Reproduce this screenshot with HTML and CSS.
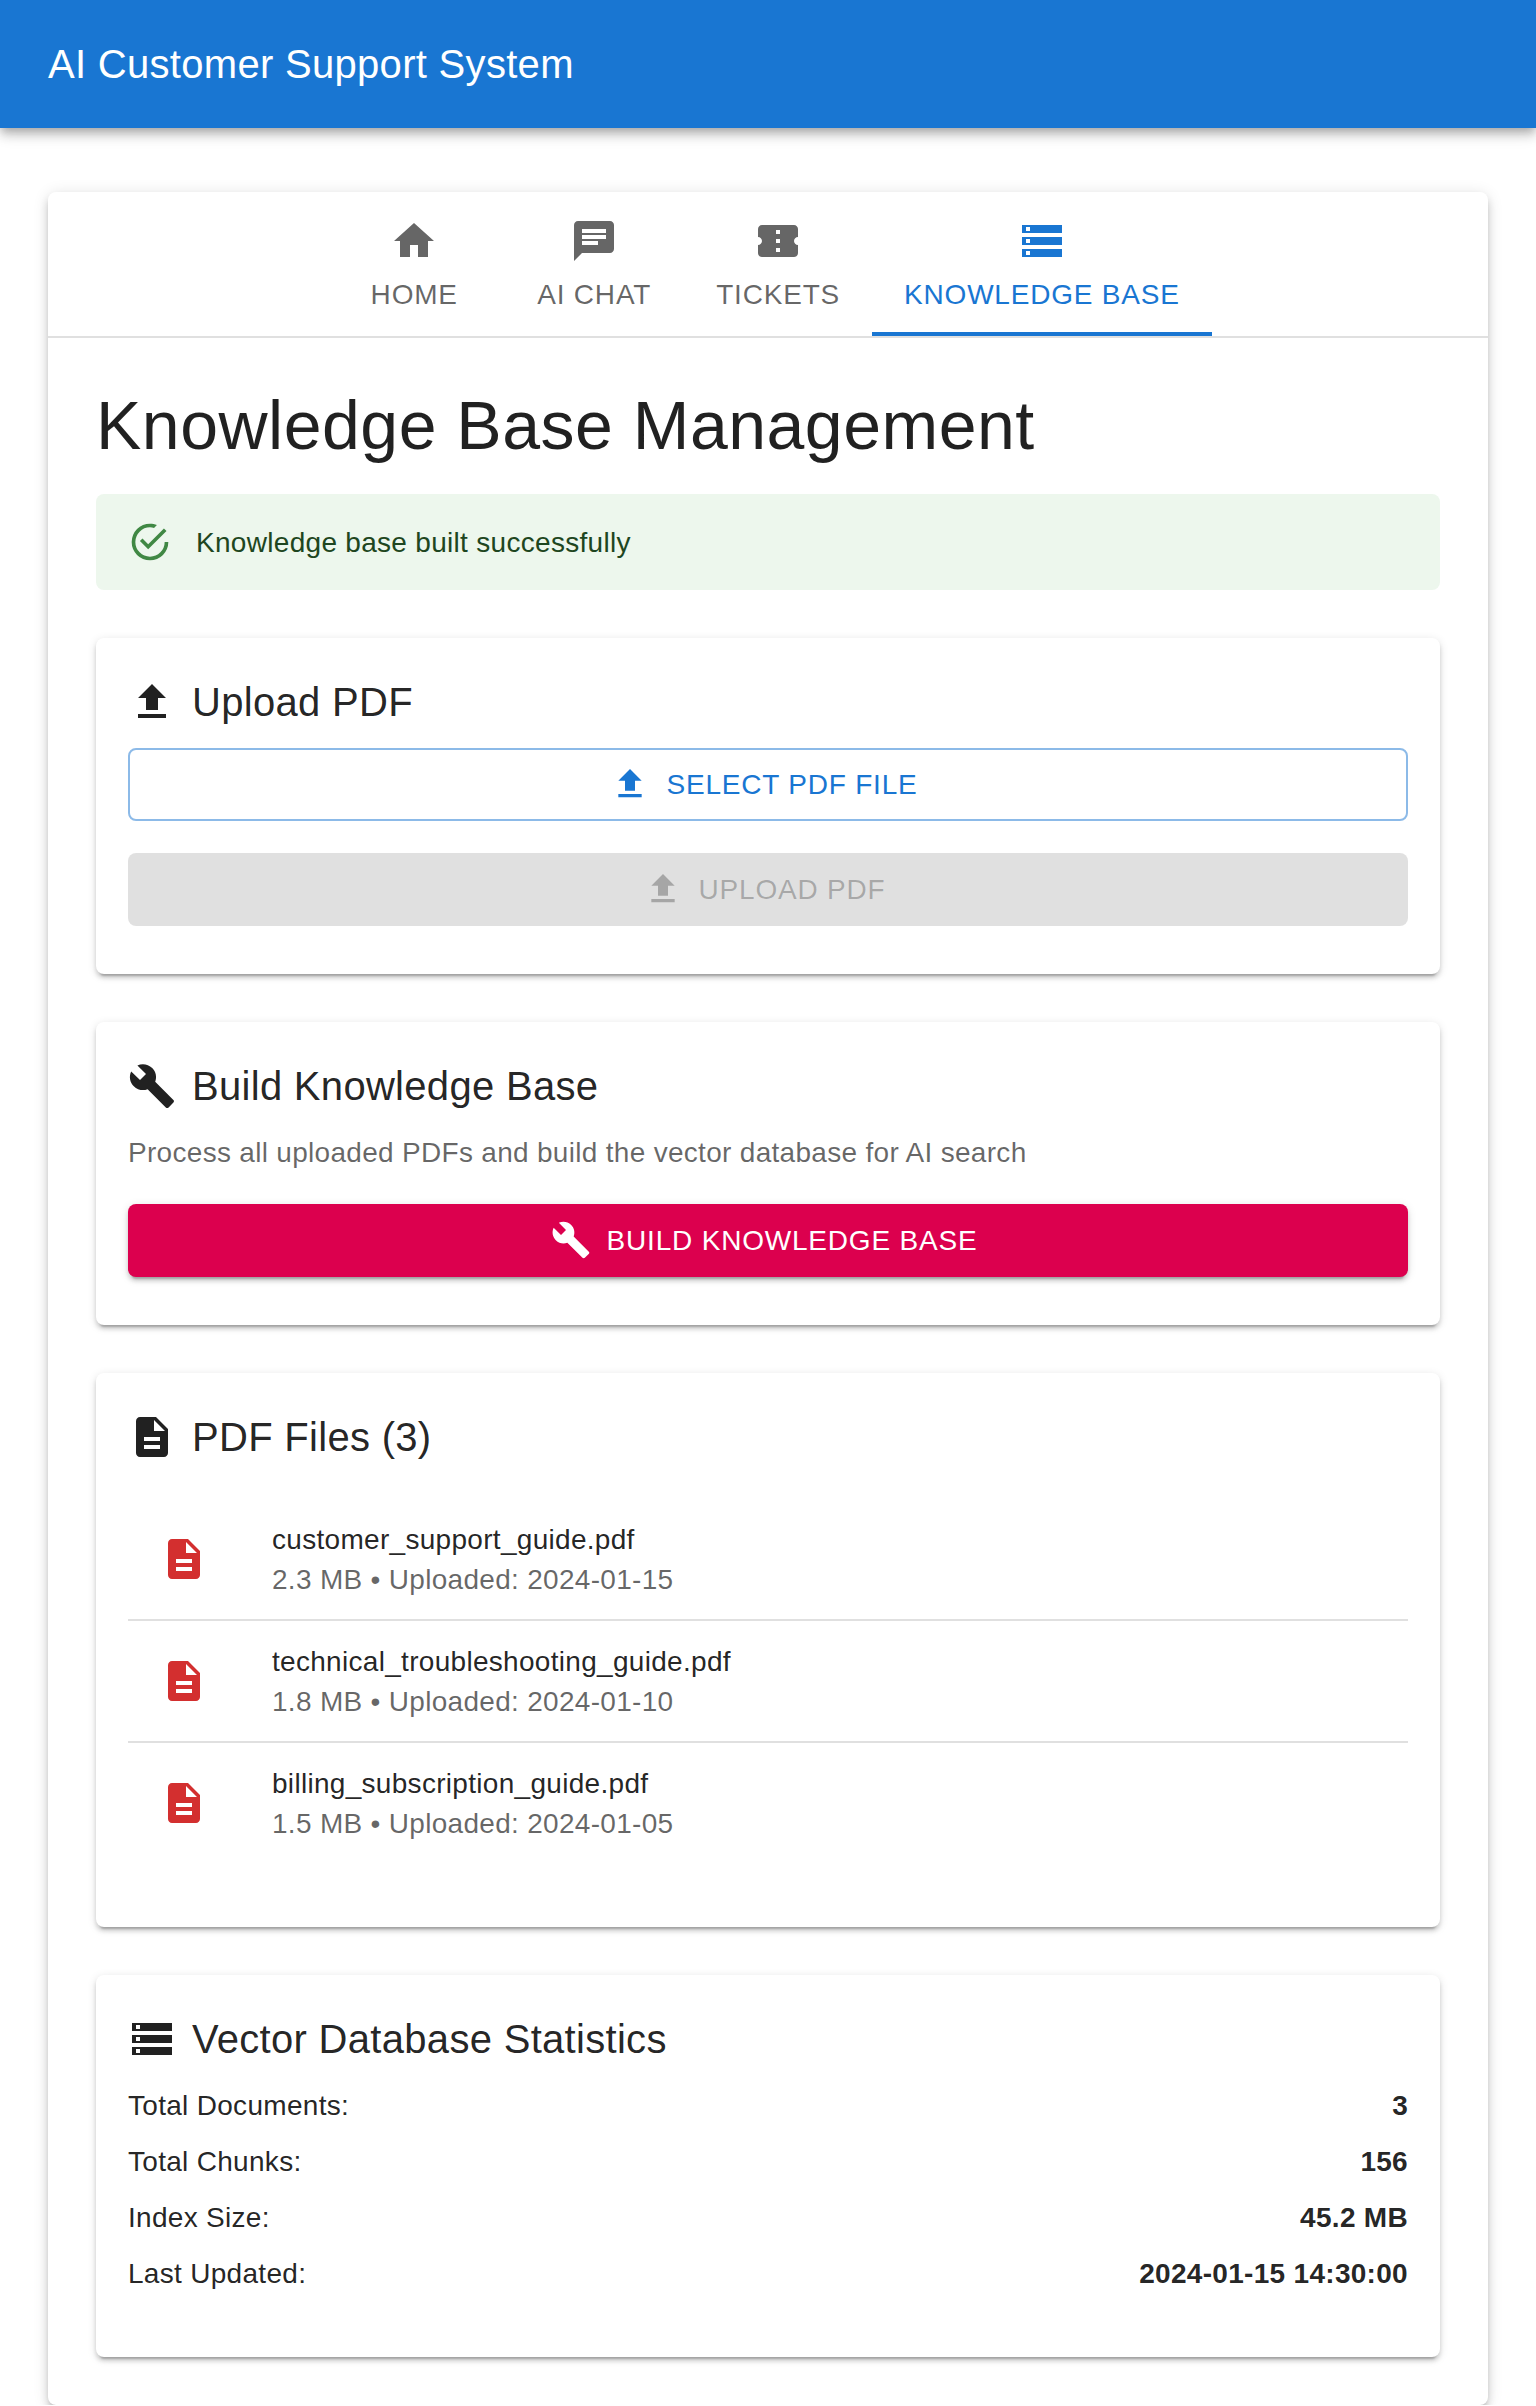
FILE: index.html
```html
<!DOCTYPE html>
<html lang="en">
<head>
<meta charset="utf-8">
<title>AI Customer Support System</title>
<link rel="stylesheet" href="styles.css">
</head>
<body>
<svg class="sprite" aria-hidden="true">
  <symbol id="home" viewBox="0 0 24 24"><path d="M10 20v-6h4v6h5v-8h3L12 3 2 12h3v8z"/></symbol>
  <symbol id="chat" viewBox="0 0 24 24"><path d="M20 2H4c-1.1 0-1.99.9-1.99 2L2 22l4-4h14c1.1 0 2-.9 2-2V4c0-1.1-.9-2-2-2zM6 9h12v2H6V9zm8 5H6v-2h8v2zm4-6H6V6h12v2z"/></symbol>
  <symbol id="ticket" viewBox="0 0 24 24"><path d="M22 10V6c0-1.11-.9-2-2-2H4c-1.1 0-1.99.89-1.99 2v4c1.1 0 1.99.9 1.99 2s-.89 2-2 2v4c0 1.1.9 2 2 2h16c1.1 0 2-.9 2-2v-4c-1.1 0-2-.9-2-2s.9-2 2-2zm-9 7.5h-2v-2h2v2zm0-4.5h-2v-2h2v2zm0-4.5h-2v-2h2v2z"/></symbol>
  <symbol id="storage" viewBox="0 0 24 24"><path d="M2 20h20v-4H2v4zm2-3h2v2H4v-2zM2 4v4h20V4H2zm4 3H4V5h2v2zm-4 7h20v-4H2v4zm2-3h2v2H4v-2z"/></symbol>
  <symbol id="success" viewBox="0 0 24 24"><path d="M20,12A8,8 0 0,1 12,20A8,8 0 0,1 4,12A8,8 0 0,1 12,4C12.76,4 13.5,4.11 14.2,4.31L15.77,2.74C14.61,2.26 13.34,2 12,2A10,10 0 0,0 2,12A10,10 0 0,0 12,22A10,10 0 0,0 22,12M7.91,10.08L6.5,11.5L11,16L21,6L19.59,4.58L11,13.17L7.91,10.08Z"/></symbol>
  <symbol id="upload" viewBox="0 0 24 24"><path d="M5 20h14v-2H5v2zm0-10h4v6h6v-6h4l-7-7-7 7z"/></symbol>
  <symbol id="build" viewBox="0 0 24 24"><path d="M22.7 19l-9.1-9.1c.9-2.3.4-5-1.5-6.9-2-2-5-2.4-7.4-1.3L9 6 6 9 1.6 4.7C.4 7.1.9 10.1 2.9 12.1c1.9 1.9 4.6 2.4 6.9 1.5l9.1 9.1c.4.4 1 .4 1.4 0l2.3-2.3c.5-.4.5-1.1.1-1.4z"/></symbol>
  <symbol id="file" viewBox="0 0 24 24"><path d="M14 2H6c-1.1 0-1.99.9-1.99 2L4 20c0 1.1.89 2 1.99 2H18c1.1 0 2-.9 2-2V8l-6-6zm2 16H8v-2h8v2zm0-4H8v-2h8v2zm-3-5V3.5L18.5 9H13z"/></symbol>
</svg>

<header class="app-bar">
  <div class="app-title">AI Customer Support System</div>
</header>

<main class="panel">
  <nav class="tabs">
    <a class="tab"><svg class="icon"><use href="#home"/></svg>Home</a>
    <a class="tab"><svg class="icon"><use href="#chat"/></svg>AI Chat</a>
    <a class="tab"><svg class="icon"><use href="#ticket"/></svg>Tickets</a>
    <a class="tab tab-active"><svg class="icon"><use href="#storage"/></svg>Knowledge Base</a>
  </nav>

  <div class="content">
    <h1 class="page-title">Knowledge Base Management</h1>

    <div class="alert">
      <svg class="icon alert-icon"><use href="#success"/></svg>
      <div class="alert-message">Knowledge base built successfully</div>
    </div>

    <section class="card">
      <h2 class="card-title"><svg class="icon"><use href="#upload"/></svg>Upload PDF</h2>
      <button class="button button-outlined"><svg class="icon"><use href="#upload"/></svg>Select PDF File</button>
      <button class="button button-disabled" disabled><svg class="icon"><use href="#upload"/></svg>Upload PDF</button>
    </section>

    <section class="card">
      <h2 class="card-title"><svg class="icon"><use href="#build"/></svg>Build Knowledge Base</h2>
      <p class="description">Process all uploaded PDFs and build the vector database for AI search</p>
      <button class="button button-secondary"><svg class="icon"><use href="#build"/></svg>Build Knowledge Base</button>
    </section>

    <section class="card">
      <h2 class="card-title"><svg class="icon"><use href="#file"/></svg>PDF Files (3)</h2>
      <ul class="files">
        <li class="file">
          <svg class="icon file-icon"><use href="#file"/></svg>
          <div class="file-text"><div>customer_support_guide.pdf</div><div class="file-meta">2.3 MB • Uploaded: 2024-01-15</div></div>
        </li>
        <li class="file">
          <svg class="icon file-icon"><use href="#file"/></svg>
          <div class="file-text"><div>technical_troubleshooting_guide.pdf</div><div class="file-meta">1.8 MB • Uploaded: 2024-01-10</div></div>
        </li>
        <li class="file">
          <svg class="icon file-icon"><use href="#file"/></svg>
          <div class="file-text"><div>billing_subscription_guide.pdf</div><div class="file-meta">1.5 MB • Uploaded: 2024-01-05</div></div>
        </li>
      </ul>
    </section>

    <section class="card">
      <h2 class="card-title"><svg class="icon"><use href="#storage"/></svg>Vector Database Statistics</h2>
      <dl class="stats">
        <div class="stat"><dt>Total Documents:</dt><dd>3</dd></div>
        <div class="stat"><dt>Total Chunks:</dt><dd>156</dd></div>
        <div class="stat"><dt>Index Size:</dt><dd>45.2 MB</dd></div>
        <div class="stat"><dt>Last Updated:</dt><dd>2024-01-15 14:30:00</dd></div>
      </dl>
    </section>
  </div>
</main>
</body>
</html>
```

FILE: styles.css
```css
* { box-sizing: border-box; }

body {
  margin: 0;
  background: #fff;
  color: rgba(0, 0, 0, 0.87);
  font-family: Helvetica, "Liberation Sans", Arial, sans-serif;
  font-size: 28px;
  line-height: 1.43;
  letter-spacing: 0.01071em;
  overflow: hidden;
}

h1, h2, p, ul, dl, dd { margin: 0; padding: 0; font-weight: 400; }

.sprite { display: none; }

.icon {
  display: block;
  flex: none;
  width: 48px;
  height: 48px;
  fill: currentColor;
}

.app-bar {
  display: flex;
  align-items: center;
  height: 128px;
  padding: 0 48px;
  background: #1976d2;
  color: #fff;
  box-shadow: 0 4px 8px -2px rgba(0, 0, 0, 0.2), 0 8px 10px 0 rgba(0, 0, 0, 0.14), 0 2px 20px 0 rgba(0, 0, 0, 0.12);
}

.app-title { font-size: 40px; line-height: 1.6; letter-spacing: 0.0075em; }

.panel {
  margin: 64px 48px 0;
  border-radius: 8px;
  background: #fff;
  box-shadow: 0 6px 6px -4px rgba(0, 0, 0, 0.2), 0 6px 8px 0 rgba(0, 0, 0, 0.14), 0 2px 16px 0 rgba(0, 0, 0, 0.12);
}

.tabs {
  display: flex;
  justify-content: center;
  height: 146px;
  border-bottom: 2px solid rgba(0, 0, 0, 0.12);
}

.tab {
  display: flex;
  flex-direction: column;
  align-items: center;
  justify-content: center;
  gap: 12px;
  min-width: 180px;
  padding: 0 32px;
  color: rgba(0, 0, 0, 0.6);
  line-height: 1.25;
  letter-spacing: 0.02857em;
  text-transform: uppercase;
}

.tab-active { color: #1976d2; box-shadow: inset 0 -4px #1976d2; }

.content { padding: 46px 48px 48px; }

.page-title {
  margin-bottom: 25.8px;
  font-size: 68px;
  line-height: 1.235;
  letter-spacing: 0.00735em;
}

.alert {
  display: flex;
  align-items: center;
  gap: 24px;
  padding: 12px 32px;
  border-radius: 8px;
  background: #edf7ed;
  color: #1e4620;
}

.alert-icon { width: 44px; height: 44px; color: #2e7d32; opacity: 0.9; }
.alert-message { padding: 17px 0 15px; }

.card {
  margin-top: 48px;
  padding: 32px 32px 48px;
  border-radius: 8px;
  background: #fff;
}

.card,
.button-secondary {
  box-shadow: 0 6px 2px -4px rgba(0, 0, 0, 0.2), 0 4px 4px 0 rgba(0, 0, 0, 0.14), 0 2px 10px 0 rgba(0, 0, 0, 0.12);
}

.card-title {
  display: flex;
  align-items: center;
  gap: 16px;
  margin-bottom: 0.35em;
  font-size: 40px;
  line-height: 1.6;
  letter-spacing: 0.0075em;
}

.button {
  display: flex;
  align-items: center;
  justify-content: center;
  gap: 16px;
  width: 100%;
  height: 73px;
  padding: 0 32px;
  border: 0;
  border-radius: 8px;
  font: inherit;
  line-height: 1.75;
  letter-spacing: 0.02857em;
  text-transform: uppercase;
}

.button .icon { width: 40px; height: 40px; margin-left: -8px; }
.button + .button { margin-top: 32px; }

.button-outlined {
  border: 2px solid rgba(25, 118, 210, 0.5);
  background: transparent;
  color: #1976d2;
}

.button-disabled { background: rgba(0, 0, 0, 0.12); color: rgba(0, 0, 0, 0.26); }

.button-secondary { background: #dc004e; color: #fff; }

.description { padding: 1px 0 31px; color: rgba(0, 0, 0, 0.6); }

.files { padding: 16px 0; list-style: none; }

.file {
  display: flex;
  align-items: center;
  gap: 64px;
  padding: 19px 32px;
}

.file + .file { border-top: 2px solid rgba(0, 0, 0, 0.12); }
.file-icon { color: #d32f2f; }
.file-text { padding-top: 2px; }
.file-meta { color: rgba(0, 0, 0, 0.6); }

.stat { display: flex; justify-content: space-between; padding: 1px 0 15px; }
.stat dd { font-weight: 700; }
```
